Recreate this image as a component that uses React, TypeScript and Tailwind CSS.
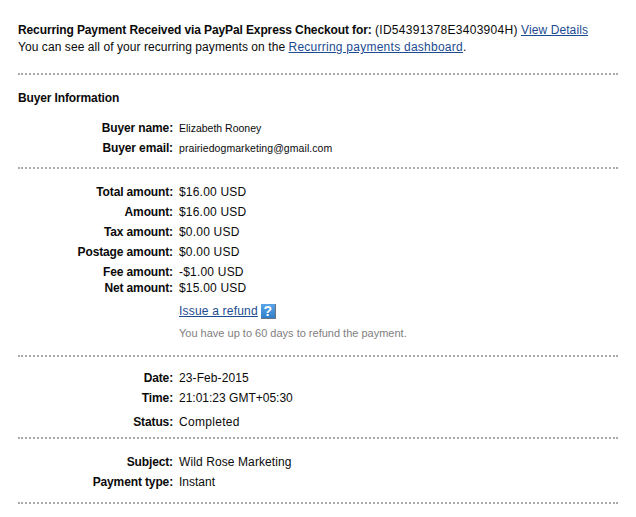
import React from 'react';

function Row({ label, children, h = 'h-[20px]', val = 'text-[12px]' }: { label: string; children: React.ReactNode; h?: string; val?: string }) {
  return (
    <div className={`flex items-center ${h}`}>
      <div className="w-[155px] text-right font-bold text-[12px] leading-none tracking-[-0.13px]">{label}</div>
      <div className={`ml-[6px] leading-none ${val}`}>{children}</div>
    </div>
  );
}

function Divider({ mt }: { mt: string }) {
  return <div className={`${mt} h-[2px] border-t-2 border-dotted border-[#aaaaaa]`} />;
}

export default function App() {
  return (
    <div className="w-[636px] h-[517px] overflow-hidden bg-white px-[18px] pt-[22px] text-[#0a0a0a] font-['Liberation_Sans',Arial,sans-serif]">
      {/* top message */}
      <div className="text-[12px] leading-[17px]">
        <div>
          <b className="tracking-[-0.11px]">Recurring Payment Received via PayPal Express Checkout for:</b>{' '}
          <span className="tracking-[0.28px]">(ID54391378E3403904H)</span>{' '}
          <a className="text-[#1c4b91] underline tracking-[0.1px]">View Details</a>
        </div>
        <div>
          <span className="tracking-[0.07px]">You can see all of your recurring payments on the</span>{' '}
          <a className="text-[#1c4b91] underline tracking-[0.25px]">Recurring payments dashboard</a>.
        </div>
      </div>
      <Divider mt="mt-[17px]" />

      {/* buyer */}
      <div className="mt-[15px] font-bold text-[12px] leading-[17px] tracking-[-0.13px]">Buyer Information</div>
      <div className="mt-[11px]">
        <Row label="Buyer name:" val="text-[10.5px]">Elizabeth Rooney</Row>
        <Row label="Buyer email:" val="text-[10.5px] tracking-[0.07px]">prairiedogmarketing@gmail.com</Row>
      </div>
      <Divider mt="mt-[9px]" />

      {/* amounts */}
      <div className="mt-[13px]">
        <Row label="Total amount:" val="text-[12px] tracking-[0.2px]">$16.00 USD</Row>
        <Row label="Amount:" val="text-[12px] tracking-[0.2px]">$16.00 USD</Row>
        <Row label="Tax amount:" val="text-[12px] tracking-[0.2px]">$0.00 USD</Row>
        <Row label="Postage amount:" val="text-[12px] tracking-[0.2px]">$0.00 USD</Row>
        <Row label="Fee amount:" val="text-[12px] tracking-[0.2px]">-$1.00 USD</Row>
        <Row label="Net amount:" h="h-[12px]" val="text-[12px] tracking-[0.2px]">$15.00 USD</Row>
      </div>
      <div className="ml-[161px] mt-[7px] flex items-center gap-[3px] h-[20px] text-[12px]">
        <a className="text-[#1c4b91] underline tracking-[0.2px]">Issue a refund</a>
        <span className="flex h-[15px] w-[15px] items-center justify-center border-r border-b border-[#6b7480] bg-gradient-to-b from-[#5aa5e6] to-[#2f7fc8] text-[14px] font-bold leading-none text-white">?</span>
      </div>
      <div className="ml-[161px] mt-[5px] text-[11px] leading-[14px] text-[#808080]">You have up to 60 days to refund the payment.</div>
      <Divider mt="mt-[15px]" />

      {/* date */}
      <div className="mt-[11px]">
        <Row label="Date:" val="text-[12px] tracking-[0.1px]">23-Feb-2015</Row>
        <Row label="Time:">21:01:23 GMT+05:30</Row>
        <Row label="Status:" h="h-[28px]" val="text-[12px] tracking-[0.3px]">Completed</Row>
      </div>
      <Divider mt="mt-[1px]" />

      {/* subject */}
      <div className="mt-[13px]">
        <Row label="Subject:" val="text-[12px] tracking-[0.1px]">Wild Rose Marketing</Row>
        <Row label="Payment type:">Instant</Row>
      </div>
      <Divider mt="mt-[10px]" />
    </div>
  );
}
